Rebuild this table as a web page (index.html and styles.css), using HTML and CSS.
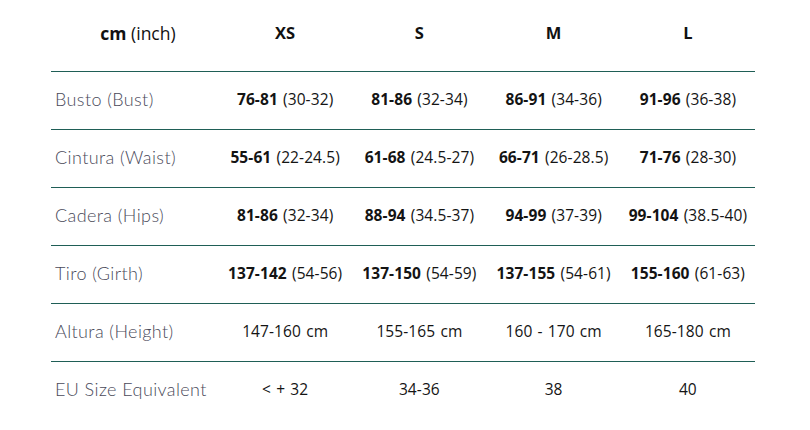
FILE: index.html
```html
<!DOCTYPE html>
<html lang="es">
<head>
  <meta charset="UTF-8">
  <title>Guía de tallas</title>
  <link rel="stylesheet" href="styles.css">
</head>
<body>
  <table class="sizes">
    <thead>
      <tr>
        <th class="unit"><b>cm</b> (inch)</th>
        <th>XS</th>
        <th>S</th>
        <th>M</th>
        <th>L</th>
      </tr>
    </thead>
    <tbody>
      <tr>
        <td class="label">Busto (Bust)</td>
        <td><b>76-81</b> (30-32)</td>
        <td><b>81-86</b> (32-34)</td>
        <td><b>86-91</b> (34-36)</td>
        <td><b>91-96</b> (36-38)</td>
      </tr>
      <tr>
        <td class="label">Cintura (Waist)</td>
        <td><b>55-61</b> (22-24.5)</td>
        <td><b>61-68</b> (24.5-27)</td>
        <td><b>66-71</b> (26-28.5)</td>
        <td><b>71-76</b> (28-30)</td>
      </tr>
      <tr>
        <td class="label">Cadera (Hips)</td>
        <td><b>81-86</b> (32-34)</td>
        <td><b>88-94</b> (34.5-37)</td>
        <td><b>94-99</b> (37-39)</td>
        <td><b>99-104</b> (38.5-40)</td>
      </tr>
      <tr>
        <td class="label">Tiro (Girth)</td>
        <td><b>137-142</b> (54-56)</td>
        <td><b>137-150</b> (54-59)</td>
        <td><b>137-155</b> (54-61)</td>
        <td><b>155-160</b> (61-63)</td>
      </tr>
      <tr>
        <td class="label">Altura (Height)</td>
        <td>147-160 cm</td>
        <td>155-165 cm</td>
        <td>160 - 170 cm</td>
        <td>165-180 cm</td>
      </tr>
      <tr>
        <td class="label">EU Size Equivalent</td>
        <td>&lt; + 32</td>
        <td>34-36</td>
        <td>38</td>
        <td>40</td>
      </tr>
    </tbody>
  </table>
</body>
</html>
```

FILE: styles.css
```css
body {
  margin: 0;
  padding: 0;
  background: #fff;
  font-family: "Open Sans", sans-serif;
  color: #111;
}

/* Tabla de tallas */
.sizes {
  border-collapse: collapse;
  margin-left: 51px;
  width: 704px;
  table-layout: fixed;
}

.sizes th,
.sizes td {
  text-align: center;
  padding: 0;
  box-sizing: border-box;
}

.sizes th {
  height: 71px;
  font-size: 16.5px;
  font-weight: bold;
  padding-bottom: 5px;
}

.sizes th.unit {
  width: 167px;
  font-weight: normal;
  font-size: 17.5px;
  padding-left: 7px;
}

.sizes th.unit b {
  font-weight: bold;
}

.sizes td {
  height: 58px;
  padding-bottom: 3px;
  border-top: 1px solid #1f5e56;
  font-size: 15.5px;
  letter-spacing: 0.1px;
  word-spacing: 1px;
  color: #141414;
}

.sizes td b {
  font-weight: bold;
}

.sizes td.label {
  text-align: left;
  padding-left: 4px;
  font-family: "Lato", sans-serif;
  font-weight: 300;
  font-size: 18px;
  letter-spacing: 0.4px;
  word-spacing: 0;
  color: #4a4a5a;
}
```
